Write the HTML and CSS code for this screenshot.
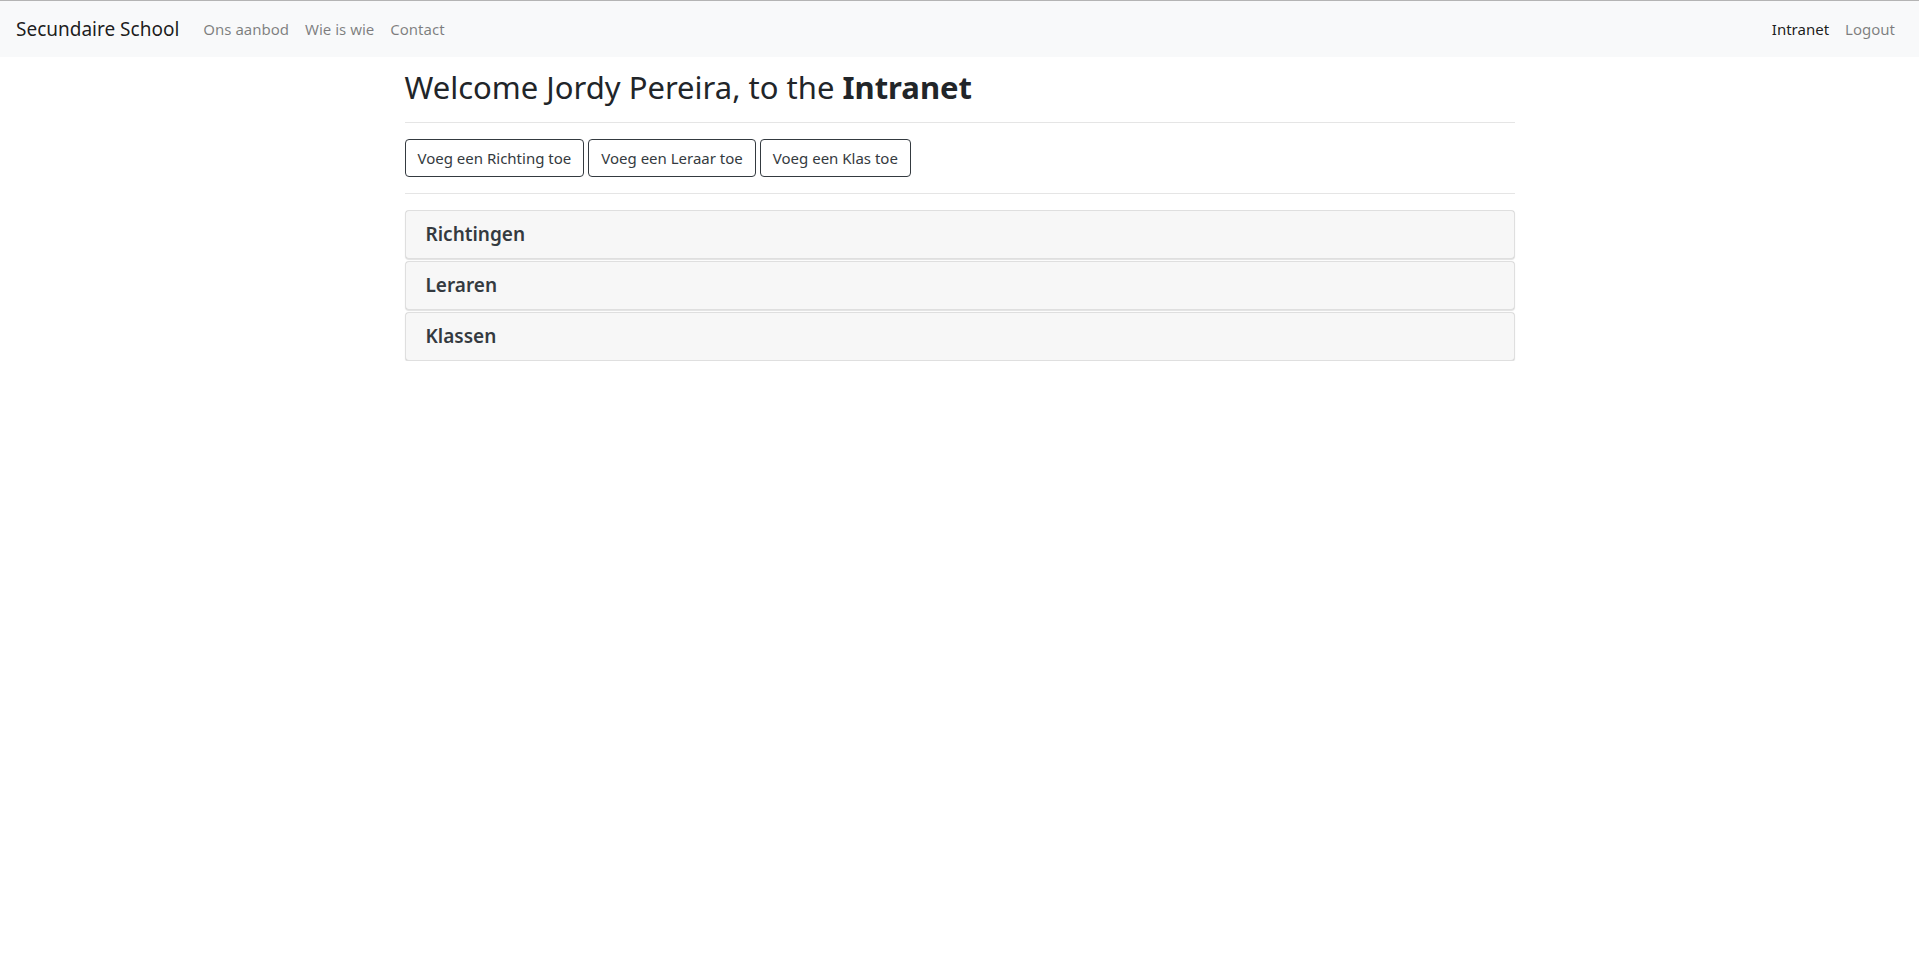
FILE: index.html
```html
<!DOCTYPE html>
<html lang="nl">
<head>
<meta charset="utf-8">
<title>Intranet</title>
<link rel="stylesheet" href="styles.css">
</head>
<body>
<div class="topline"></div>
<nav class="navbar">
  <div class="nav-left">
    <a class="brand" href="#">Secundaire School</a>
    <a class="nav-link" href="#">Ons aanbod</a>
    <a class="nav-link" href="#">Wie is wie</a>
    <a class="nav-link" href="#">Contact</a>
  </div>
  <div class="nav-right">
    <a class="nav-link active" href="#">Intranet</a>
    <a class="nav-link" href="#">Logout</a>
  </div>
</nav>
<main class="container">
  <h2 class="title">Welcome Jordy Pereira, to the <b>Intranet</b></h2>
  <hr class="rule">
  <div class="actions">
    <button class="btn">Voeg een Richting toe</button>
    <button class="btn">Voeg een Leraar toe</button>
    <button class="btn">Voeg een Klas toe</button>
  </div>
  <hr class="rule">
  <div class="accordion">
    <div class="card"><h5 class="card-header">Richtingen</h5></div>
    <div class="card"><h5 class="card-header">Leraren</h5></div>
    <div class="card"><h5 class="card-header">Klassen</h5></div>
  </div>
</main>
</body>
</html>
```

FILE: styles.css
```css
* { box-sizing: border-box; }
html, body { margin: 0; padding: 0; }
body {
  font-family: "Noto Sans", "Open Sans", sans-serif;
  font-size: 16px;
  line-height: 1.5;
  color: #212529;
  background: #fff;
}
a { text-decoration: none; }
.topline { height: 1px; background: #b4b4b4; }
.navbar {
  height: 56px;
  background: #f8f9fa;
  display: flex;
  align-items: center;
  justify-content: space-between;
  padding: 0 16px;
}
.nav-left, .nav-right { display: flex; align-items: center; }
.brand {
  font-size: 19px;
  color: rgba(0,0,0,.9);
  margin-right: 16px;
  line-height: 30px;
}
.nav-link {
  color: rgba(0,0,0,.5);
  padding: 8px 8px;
  font-size: 15px;
}
.nav-link.active { color: rgba(0,0,0,.9); }
.container {
  width: 1140px;
  margin: 0 auto;
  padding: 0 15px;
}
.title {
  font-weight: 400;
  font-size: 31px;
  line-height: 1.2;
  margin: 0 0 8px;
  padding-top: 12px;
}
.title b { font-weight: 700; }
.rule {
  border: 0;
  border-top: 1px solid rgba(0,0,0,.1);
  margin: 16px 0;
}
.actions { display: flex; gap: 4px; }
.btn {
  font-family: inherit;
  font-size: 15px;
  line-height: 24px;
  padding: 6px 12px;
  border: 1px solid #343a40;
  border-radius: 4px;
  background: transparent;
  color: #343a40;
  height: 38px;
}
.accordion { display: flex; flex-direction: column; gap: 2px; }
.card {
  border: 1px solid rgba(0,0,0,.125);
  border-radius: 4px;
  background: #fff;
  box-shadow: 0 1px 1px rgba(0,0,0,.12);
}
.card-header {
  margin: 0;
  padding: 12px 20px;
  font-size: 19px;
  font-weight: 600;
  line-height: 23px;
  background: rgba(0,0,0,.03);
  color: #343a40;
}
```
